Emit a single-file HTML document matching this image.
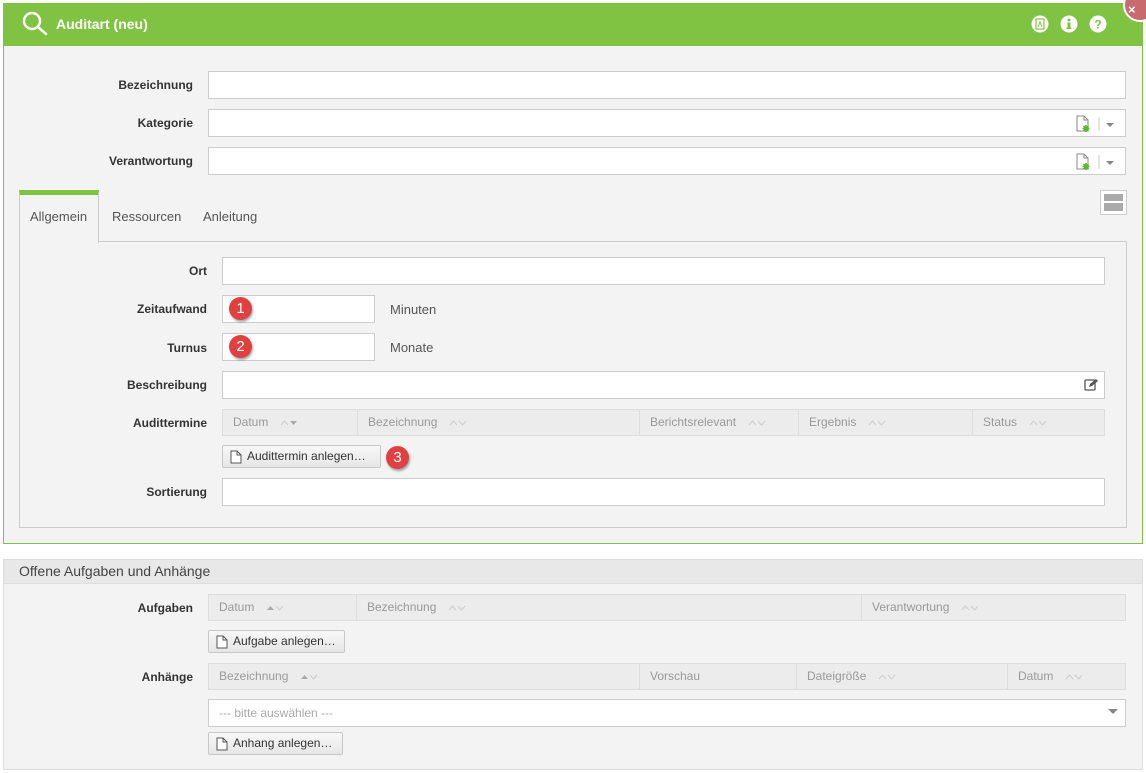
<!DOCTYPE html>
<html><head><meta charset="utf-8"><style>
*{box-sizing:border-box;margin:0;padding:0}
body{width:1146px;height:773px;background:#fff;font-family:"Liberation Sans",sans-serif;font-size:12px;color:#333;position:relative;overflow:hidden}
.a{position:absolute}
.lbl{position:absolute;font-weight:bold;font-size:12px;color:#333;text-align:right;line-height:14px}
.inp{position:absolute;background:#fff;border:1px solid #ccc;height:28px}
.th{position:absolute;background:#ececec;border:1px solid #ddd;height:27px}
.th>span{position:absolute;top:0;line-height:25px;color:#999;font-size:12px;padding-left:10px;border-left:1px solid #ddd;height:25px;white-space:nowrap}
.th>span:first-child{border-left:none}
.th svg{margin-left:12px;vertical-align:middle}
.btn{position:absolute;height:23px;background:linear-gradient(#f8f8f8,#e6e6e6);border:1px solid #c8c8c8;border-radius:2px;font-size:12px;line-height:21px;color:#333;padding-left:24px}
.btn svg{position:absolute;left:7px;top:4px}
.badge{position:absolute;width:23px;height:23px;border-radius:50%;background:#e04040;color:#fff;font-size:15px;text-align:center;line-height:23px;box-shadow:1px 2px 2px rgba(0,0,0,.35)}
</style></head><body>
<div class="a" style="left:3px;top:3px;width:1140px;height:541px;background:#f3f3f3;border:1px solid #80c342"></div>
<div class="a" style="left:3px;top:3px;width:1140px;height:43px;background:#80c342"></div>
<svg class="a" style="left:20px;top:10px" width="30" height="28" viewBox="0 0 30 28"><circle cx="12" cy="11" r="8" fill="none" stroke="#fff" stroke-width="2.5"/><line x1="18" y1="17" x2="26" y2="24" stroke="#fff" stroke-width="2.5" stroke-linecap="round"/></svg>
<div class="a" style="left:56px;top:16px;color:#fff;font-weight:bold;font-size:14px">Auditart (neu)</div>
<svg class="a" style="left:1031px;top:15px" width="18" height="18"><circle cx="9" cy="9" r="8.5" fill="#fff"/><rect x="5" y="4" width="8" height="10" fill="none" stroke="#80c342" stroke-width="1.2"/><path d="M7 12 L9 7 L11 12" fill="none" stroke="#80c342" stroke-width="1"/></svg>
<svg class="a" style="left:1060px;top:15px" width="18" height="18"><circle cx="9" cy="9" r="8.5" fill="#fff"/><circle cx="9" cy="5" r="1.5" fill="#80c342"/><rect x="7.5" y="7.5" width="3" height="6" fill="#80c342"/><rect x="6.5" y="12.5" width="5" height="1.5" fill="#80c342"/></svg>
<svg class="a" style="left:1089px;top:15px" width="18" height="18"><circle cx="9" cy="9" r="8.5" fill="#fff"/><text x="9" y="13.5" font-size="12" font-weight="bold" fill="#80c342" text-anchor="middle" font-family="Liberation Sans">?</text></svg>
<div class="a" style="left:1123px;top:-12px;width:34px;height:34px;border-radius:50%;background:#c96a6e;border:2px solid #fff"></div>
<div class="a" style="left:1128px;top:2px;color:#fff;font-weight:bold;font-size:13px">×</div>

<div class="lbl" style="left:60px;width:133px;top:78px">Bezeichnung</div>
<div class="inp" style="left:208px;top:71px;width:918px"></div>
<div class="lbl" style="left:60px;width:133px;top:116px">Kategorie</div>
<div class="inp" style="left:208px;top:109px;width:918px"></div>
<div class="lbl" style="left:60px;width:133px;top:154px">Verantwortung</div>
<div class="inp" style="left:208px;top:147px;width:918px"></div>
<svg class="a" style="left:1076px;top:115px" width="50" height="18"><path d="M1 1h7l4 4v11H1z" fill="#fff" stroke="#888"/><path d="M8 1v4h4" fill="none" stroke="#888"/><path d="M10 10v7M6.5 13.5h7M7.5 11l5 5M12.5 11l-5 5" stroke="#5bb82e" stroke-width="1.6"/><line x1="23" y1="2" x2="23" y2="16" stroke="#ccc"/><path d="M30 8h8l-4 4z" fill="#888"/></svg>
<svg class="a" style="left:1076px;top:153px" width="50" height="18"><path d="M1 1h7l4 4v11H1z" fill="#fff" stroke="#888"/><path d="M8 1v4h4" fill="none" stroke="#888"/><path d="M10 10v7M6.5 13.5h7M7.5 11l5 5M12.5 11l-5 5" stroke="#5bb82e" stroke-width="1.6"/><line x1="23" y1="2" x2="23" y2="16" stroke="#ccc"/><path d="M30 8h8l-4 4z" fill="#888"/></svg>

<div class="a" style="left:19px;top:241px;width:1108px;height:287px;border:1px solid #ccc;background:#f3f3f3"></div>
<div class="a" style="left:19px;top:190px;width:80px;height:53px;border:1px solid #ccc;border-bottom:none;border-top:5px solid #80c342;background:#f3f3f3"></div>
<div class="a" style="left:30px;top:209px;font-size:13px;color:#555">Allgemein</div>
<div class="a" style="left:112px;top:209px;font-size:13px;color:#555">Ressourcen</div>
<div class="a" style="left:203px;top:209px;font-size:13px;color:#555">Anleitung</div>
<div class="a" style="left:1100px;top:190px;width:27px;height:25px;border:1px solid #ccc;background:#fff"></div>
<div class="a" style="left:1104px;top:194px;width:19px;height:7px;background:#aaa"></div>
<div class="a" style="left:1104px;top:203px;width:19px;height:8px;background:#aaa"></div>

<div class="lbl" style="left:80px;width:127px;top:264px">Ort</div>
<div class="inp" style="left:222px;top:257px;width:883px"></div>
<div class="lbl" style="left:80px;width:127px;top:302px">Zeitaufwand</div>
<div class="inp" style="left:222px;top:295px;width:153px"></div>
<div class="a" style="left:390px;top:302px;font-size:13px;color:#555">Minuten</div>
<div class="lbl" style="left:80px;width:127px;top:341px">Turnus</div>
<div class="inp" style="left:222px;top:333px;width:153px"></div>
<div class="a" style="left:390px;top:340px;font-size:13px;color:#555">Monate</div>
<div class="lbl" style="left:80px;width:127px;top:378px">Beschreibung</div>
<div class="inp" style="left:222px;top:371px;width:883px"></div>
<svg class="a" style="left:1084px;top:378px" width="14" height="14"><rect x="1" y="2" width="10" height="10" rx="1" fill="none" stroke="#555" stroke-width="1.3"/><path d="M5 9l1-3 6-5 2 2-6 5z" fill="#555"/></svg>
<div class="lbl" style="left:80px;width:127px;top:416px">Audittermine</div>
<div class="th" style="left:222px;top:409px;width:883px">
<span style="left:0;width:134px">Datum<svg width="18" height="8"><path d="M1 6l3.5-4 3.5 4" fill="none" stroke="#ccc"/><path d="M10 2h7l-3.5 4z" fill="#aaa"/></svg></span>
<span style="left:134px;width:282px">Bezeichnung<svg width="18" height="8"><path d="M1 6l3.5-4 3.5 4M10 2l3.5 4 3.5-4" fill="none" stroke="#ccc"/></svg></span>
<span style="left:416px;width:159px">Berichtsrelevant<svg width="18" height="8"><path d="M1 6l3.5-4 3.5 4M10 2l3.5 4 3.5-4" fill="none" stroke="#ccc"/></svg></span>
<span style="left:575px;width:174px">Ergebnis<svg width="18" height="8"><path d="M1 6l3.5-4 3.5 4M10 2l3.5 4 3.5-4" fill="none" stroke="#ccc"/></svg></span>
<span style="left:749px;width:132px">Status<svg width="18" height="8"><path d="M1 6l3.5-4 3.5 4M10 2l3.5 4 3.5-4" fill="none" stroke="#ccc"/></svg></span>
</div>
<div class="btn" style="left:222px;top:445px;width:159px"><svg width="12" height="14"><path d="M1 1h6l4 4v8H1z" fill="#fff" stroke="#555"/><path d="M7 1v4h4" fill="none" stroke="#555"/></svg>Audittermin anlegen…</div>
<div class="lbl" style="left:80px;width:127px;top:485px">Sortierung</div>
<div class="inp" style="left:222px;top:478px;width:883px"></div>

<div class="badge" style="left:229px;top:297px">1</div>
<div class="badge" style="left:229px;top:335px">2</div>
<div class="badge" style="left:386px;top:446px">3</div>

<div class="a" style="left:3px;top:559px;width:1140px;height:211px;background:#f3f3f3;border:1px solid #ddd"></div>
<div class="a" style="left:3px;top:559px;width:1140px;height:25px;background:#e8e8e8;border:1px solid #ddd"></div>
<div class="a" style="left:19px;top:563px;font-size:14px;color:#444">Offene Aufgaben und Anhänge</div>
<div class="lbl" style="left:60px;width:133px;top:601px">Aufgaben</div>
<div class="th" style="left:208px;top:594px;width:918px">
<span style="left:0;width:147px">Datum<svg width="18" height="8"><path d="M1 6h7l-3.5-4z" fill="#aaa"/><path d="M10 2l3.5 4 3.5-4" fill="none" stroke="#ccc"/></svg></span>
<span style="left:147px;width:505px">Bezeichnung<svg width="18" height="8"><path d="M1 6l3.5-4 3.5 4M10 2l3.5 4 3.5-4" fill="none" stroke="#ccc"/></svg></span>
<span style="left:652px;width:264px">Verantwortung<svg width="18" height="8"><path d="M1 6l3.5-4 3.5 4M10 2l3.5 4 3.5-4" fill="none" stroke="#ccc"/></svg></span>
</div>
<div class="btn" style="left:208px;top:630px;width:137px"><svg width="12" height="14"><path d="M1 1h6l4 4v8H1z" fill="#fff" stroke="#555"/><path d="M7 1v4h4" fill="none" stroke="#555"/></svg>Aufgabe anlegen…</div>
<div class="lbl" style="left:60px;width:133px;top:670px">Anhänge</div>
<div class="th" style="left:208px;top:663px;width:918px">
<span style="left:0;width:430px">Bezeichnung<svg width="18" height="8"><path d="M1 6h7l-3.5-4z" fill="#aaa"/><path d="M10 2l3.5 4 3.5-4" fill="none" stroke="#ccc"/></svg></span>
<span style="left:430px;width:157px">Vorschau</span>
<span style="left:587px;width:211px">Dateigröße<svg width="18" height="8"><path d="M1 6l3.5-4 3.5 4M10 2l3.5 4 3.5-4" fill="none" stroke="#ccc"/></svg></span>
<span style="left:798px;width:118px">Datum<svg width="18" height="8"><path d="M1 6l3.5-4 3.5 4M10 2l3.5 4 3.5-4" fill="none" stroke="#ccc"/></svg></span>
</div>
<div class="inp" style="left:208px;top:699px;width:918px"></div>
<div class="a" style="left:219px;top:706px;color:#aaa;font-size:12px">--- bitte auswählen ---</div>
<svg class="a" style="left:1108px;top:709px" width="10" height="6"><path d="M0 0h10l-5 5z" fill="#888"/></svg>
<div class="btn" style="left:208px;top:732px;width:135px"><svg width="12" height="14"><path d="M1 1h6l4 4v8H1z" fill="#fff" stroke="#555"/><path d="M7 1v4h4" fill="none" stroke="#555"/></svg>Anhang anlegen…</div>
</body></html>
